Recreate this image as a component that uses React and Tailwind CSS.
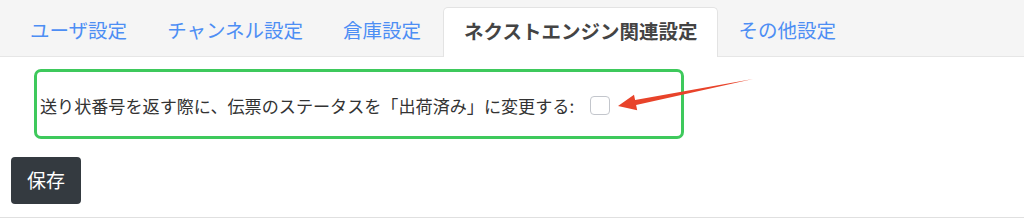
import { useState } from "react";

const tabs = ["ユーザ設定", "チャンネル設定", "倉庫設定", "ネクストエンジン関連設定", "その他設定"];

const App = () => {
  const [active, setActive] = useState(3);
  const [checked, setChecked] = useState(false);

  return (
    <div
      className="relative w-full h-[219px] bg-white overflow-hidden"
      style={{ fontFamily: '"Noto Sans CJK JP", "Noto Sans", sans-serif' }}
    >
      {/* タブ */}
      <div className="flex items-end h-[57px] pl-[10px] bg-[#f5f5f5] border-b border-[#e6e6e6]">
        {tabs.map((tab, i) =>
          i === active ? (
            <div
              key={tab}
              className="flex items-center h-[50px] -mb-px ml-[2px] px-5 pb-[4px] bg-white border border-b-0 border-[#e3e3e3] rounded-t-[5px] text-[19.5px] font-bold text-[#444]"
            >
              {tab}
            </div>
          ) : (
            <button
              key={tab}
              onClick={() => setActive(i)}
              className="flex items-center h-[49px] px-5 pb-[4px] text-[19.5px] text-[#4d8ef4]"
            >
              {tab}
            </button>
          )
        )}
      </div>

      {/* 設定内容 */}
      <div className="pt-[12px]">
        <div className="ml-[34px] w-[650px] h-[70px] border-[3px] border-[#3ec95c] rounded-[7px] flex items-center pl-[3px] pt-[4px]">
          <label className="flex items-center text-[17.1px] text-[#333]">
            送り状番号を返す際に、伝票のステータスを「出荷済み」に変更する:
            <input
              type="checkbox"
              checked={checked}
              onChange={(e) => setChecked(e.target.checked)}
              className="appearance-none ml-[16px] w-[20px] h-[19px] border border-[#c3c6cc] rounded-[4px] bg-white checked:bg-[#0d6efd]"
            />
          </label>
        </div>
      </div>

      <div className="pt-[18px] pl-[11px]">
        <button className="w-[70px] h-[47px] bg-[#343a40] rounded-[4px] text-white text-[19px]">保存</button>
      </div>

      <div className="absolute left-0 right-0 top-[217px] border-t border-[#e0e0e0]" />

      {/* 赤い矢印 */}
      <svg className="absolute left-0 top-0 pointer-events-none" width="1024" height="219">
        <polygon
          points="618,106 634,94.7 635.1,100 753,79 636.1,105 637.2,110.3"
          fill="#e8432a"
        />
      </svg>
    </div>
  );
};

export default App;
